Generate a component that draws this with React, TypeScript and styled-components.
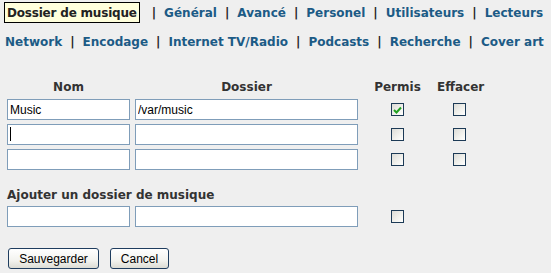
import React from "react";
import styled, { createGlobalStyle } from "styled-components";

const GlobalStyle = createGlobalStyle`
  body {
    margin: 0;
    background: #efefef;
    font-family: "DejaVu Sans", Verdana, sans-serif;
  }
`;

const Page = styled.div`
  width: 551px;
  height: 273px;
  overflow: hidden;
`;

const Nav = styled.nav`
  padding: 2px 0 0 4px;
  display: flex;
  flex-direction: column;
  gap: 11px;
`;

const NavRow = styled.div<{ $indent?: number }>`
  display: flex;
  align-items: center;
  gap: 8px;
  height: ${(p) => (p.$indent ? "16px" : "21px")};
  padding-left: ${(p) => p.$indent || 0}px;
  font-size: 12px;
  font-weight: bold;
`;

const NavLink = styled.a`
  color: #1c5b86;
  text-decoration: none;
  white-space: nowrap;
`;

const ActiveTab = styled.span`
  box-sizing: border-box;
  height: 21px;
  display: flex;
  align-items: center;
  padding: 0 2px;
  margin-right: 4px;
  border: 1px solid #000;
  background: #ffffdc;
  color: #222;
  white-space: nowrap;
  letter-spacing: -0.2px;
`;

const Sep = styled.span`
  color: #222;
`;

const Grid = styled.div`
  display: grid;
  grid-template-columns: 123px 223px 69px 45px;
  column-gap: 5px;
  row-gap: 4px;
  padding: 0 0 0 7px;
  align-items: center;
`;

const Table = styled(Grid)`
  margin-top: 30px;
`;

const Head = styled.div`
  height: 15px;
  font-size: 12px;
  font-weight: bold;
  color: #333;
  text-align: center;
  white-space: nowrap;
`;

const FieldWrap = styled.div`
  position: relative;
  height: 21px;
`;

const Field = styled.input`
  display: block;
  box-sizing: border-box;
  width: 100%;
  height: 21px;
  margin: 0;
  padding: 0 2px;
  border: 1px solid #7f9db9;
  background: #fff;
  font-family: "Liberation Sans", Arial, sans-serif;
  font-size: 12px;
  color: #000;
  outline: none;
`;

const Caret = styled.span`
  position: absolute;
  left: 3px;
  top: 3px;
  width: 1px;
  height: 14px;
  background: #000;
`;

const CheckCell = styled.div`
  display: flex;
  justify-content: center;
`;

const Box = styled.span`
  box-sizing: border-box;
  width: 13px;
  height: 13px;
  display: flex;
  align-items: center;
  justify-content: center;
  border: 1px solid #1c3a56;
  background: linear-gradient(135deg, #dcdcd7 0%, #f2f2ee 60%, #ffffff 100%);
`;

const Section = styled.div`
  margin-top: 18px;
  padding-left: 7px;
  font-size: 12px;
  font-weight: bold;
  color: #333;
  height: 15px;
`;

const AddRow = styled(Grid)`
  margin-top: 3px;
`;

const Buttons = styled.div`
  display: flex;
  gap: 11px;
  padding: 21px 0 0 8px;
`;

const Button = styled.button<{ $w: number }>`
  box-sizing: border-box;
  width: ${(p) => p.$w}px;
  height: 21px;
  margin: 0;
  padding: 0;
  border: 1px solid #1f3d5f;
  border-radius: 3px;
  background: linear-gradient(180deg, #ffffff 0%, #f3f3ef 60%, #dcdcd4 100%);
  font-family: "Liberation Sans", Arial, sans-serif;
  font-size: 12px;
  color: #000;
`;

const Checkbox: React.FC<{ checked?: boolean }> = ({ checked }) => (
  <CheckCell>
    <Box>
      {checked && (
        <svg width="9" height="8" viewBox="0 0 9 8">
          <path d="M1 4 L3.5 6.5 L8 1.5" fill="none" stroke="#21a121" strokeWidth="2" />
        </svg>
      )}
    </Box>
  </CheckCell>
);

const row1 = ["Général", "Avancé", "Personel", "Utilisateurs", "Lecteurs"];
const row2 = ["Network", "Encodage", "Internet TV/Radio", "Podcasts", "Recherche", "Cover art"];

const folders = [
  { name: "Music", path: "/var/music", allowed: true },
  { name: "", path: "", allowed: false, focused: true },
  { name: "", path: "", allowed: false },
];

const App: React.FC = () => (
  <Page>
    <GlobalStyle />
    <Nav>
      <NavRow>
        <ActiveTab>Dossier de musique</ActiveTab>
        {row1.map((label) => (
          <React.Fragment key={label}>
            <Sep>|</Sep>
            <NavLink href="#">{label}</NavLink>
          </React.Fragment>
        ))}
      </NavRow>
      <NavRow $indent={1}>
        {row2.map((label, i) => (
          <React.Fragment key={label}>
            {i > 0 && <Sep>|</Sep>}
            <NavLink href="#">{label}</NavLink>
          </React.Fragment>
        ))}
      </NavRow>
    </Nav>

    <Table>
      <Head>Nom</Head>
      <Head>Dossier</Head>
      <Head>Permis</Head>
      <Head>Effacer</Head>
      {folders.map((f, i) => (
        <React.Fragment key={i}>
          <FieldWrap>
            <Field defaultValue={f.name} />
            {f.focused && <Caret />}
          </FieldWrap>
          <FieldWrap>
            <Field defaultValue={f.path} />
          </FieldWrap>
          <Checkbox checked={f.allowed} />
          <Checkbox />
        </React.Fragment>
      ))}
    </Table>

    <Section>Ajouter un dossier de musique</Section>
    <AddRow>
      <FieldWrap>
        <Field />
      </FieldWrap>
      <FieldWrap>
        <Field />
      </FieldWrap>
      <Checkbox />
    </AddRow>

    <Buttons>
      <Button $w={91}>Sauvegarder</Button>
      <Button $w={59}>Cancel</Button>
    </Buttons>
  </Page>
);

export default App;
